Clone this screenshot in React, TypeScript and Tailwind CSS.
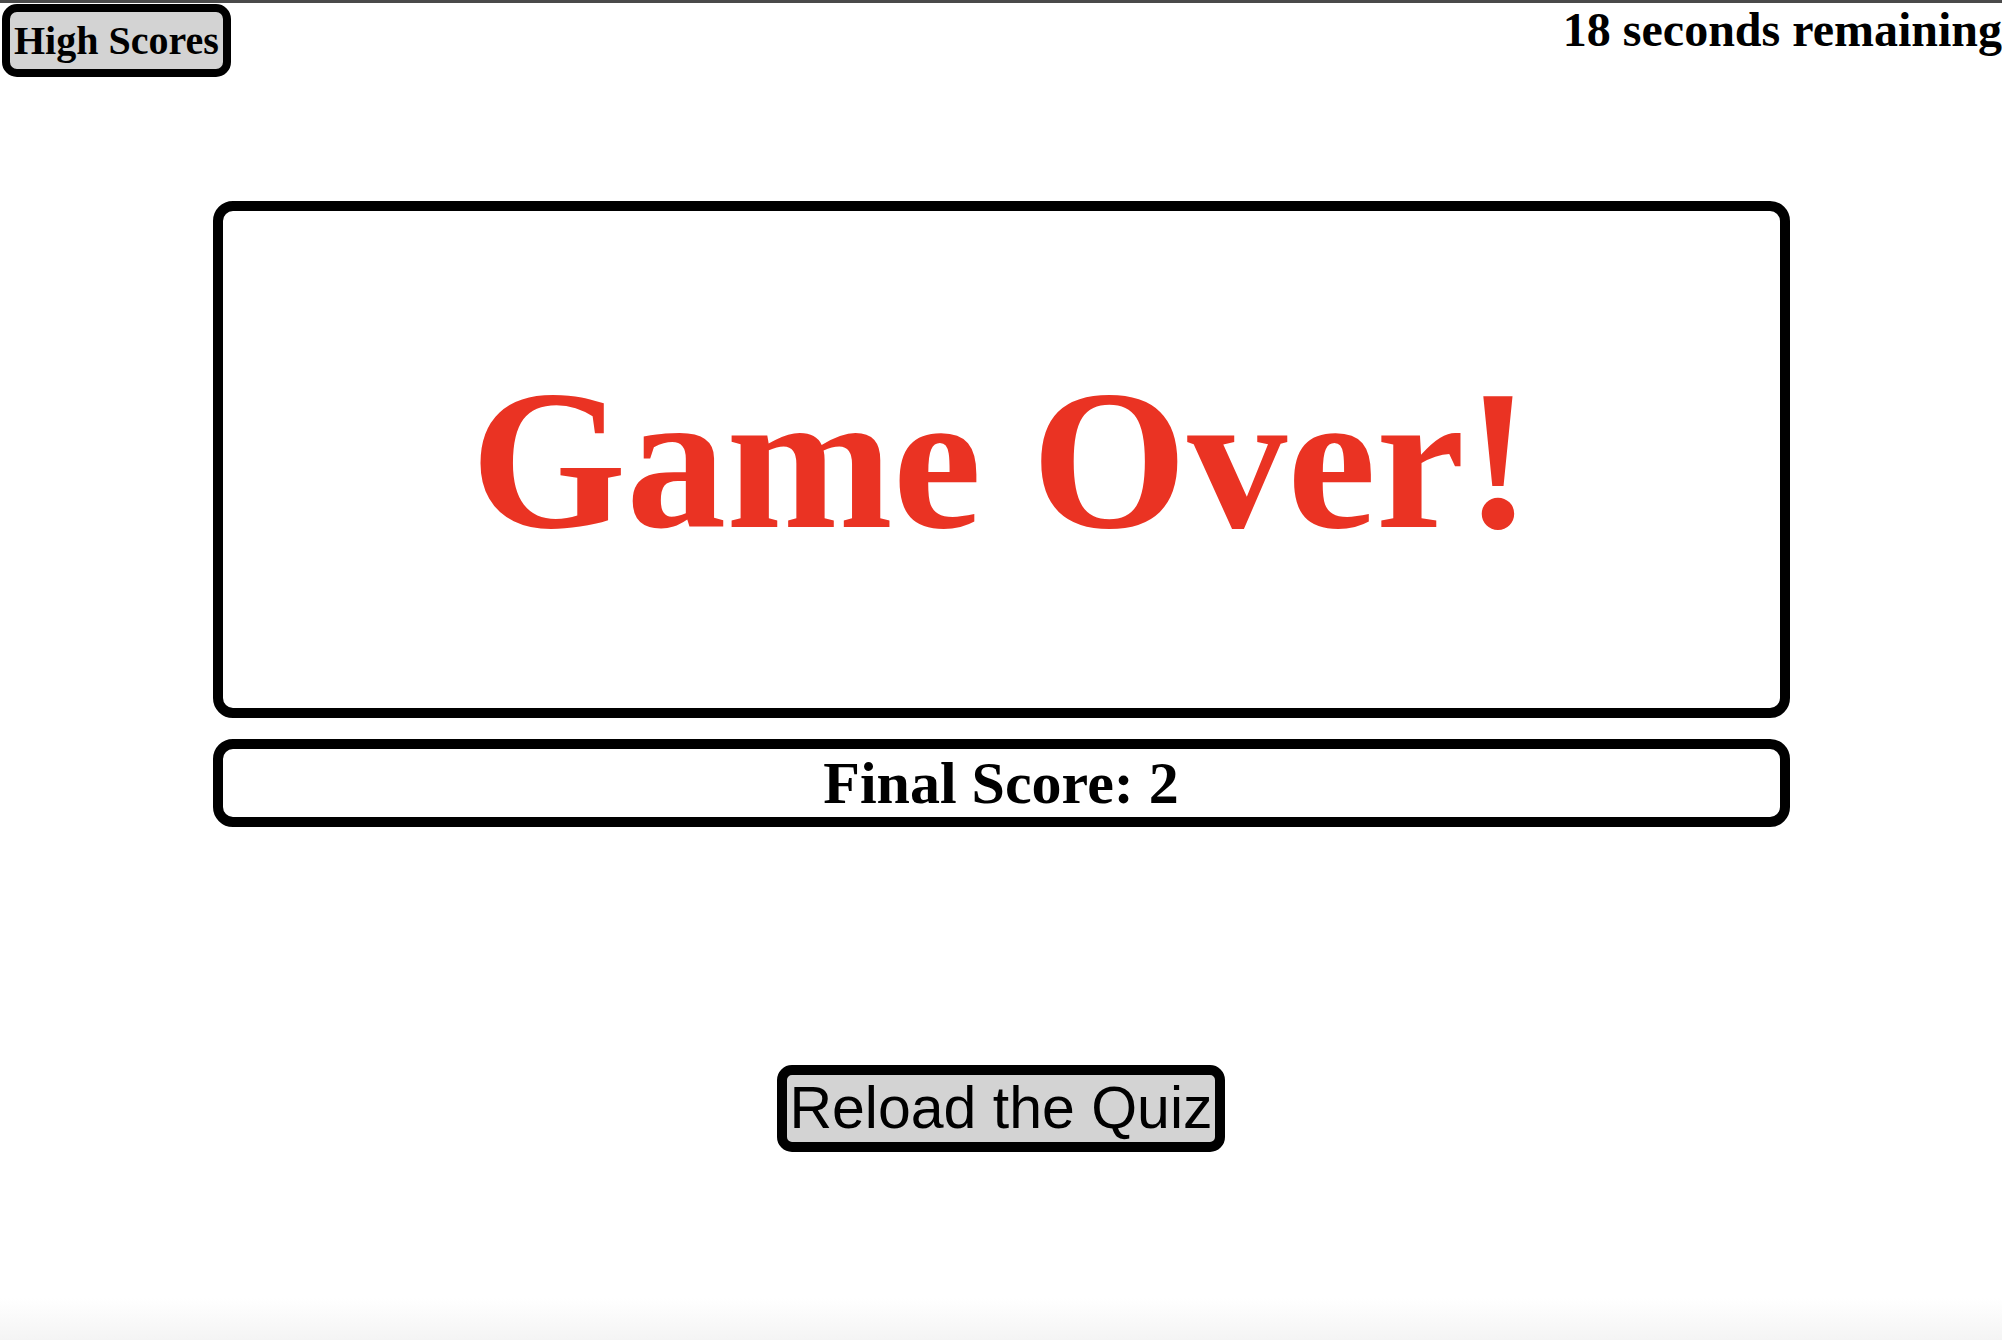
const serif = "font-['Liberation_Serif','Times_New_Roman',serif]";

export default function App() {
  return (
    <div className="h-[1340px] w-full overflow-hidden bg-[linear-gradient(to_bottom,#ffffff_calc(100%-42px),#f4f4f4)]">
      {/* window edge */}
      <div className="h-[3px] w-full bg-[#4a4a4a]" />

      <header className="flex items-start justify-between">
        <button
          className={`ml-[2px] mt-[1px] h-[73px] whitespace-nowrap rounded-[15px] border-[8px] border-black bg-[#d3d3d3] px-[4px] text-left text-[40px] font-bold leading-[57px] text-black ${serif}`}
        >
          High Scores
        </button>
        <h2
          className={`whitespace-nowrap text-[48px] font-bold leading-[53px] text-black ${serif}`}
        >
          18 seconds remaining
        </h2>
      </header>

      <main className="flex flex-col items-center">
        <section className="mt-[124px] flex h-[517px] w-[1577px] items-center justify-center rounded-[20px] border-[10px] border-black">
          <h1 className={`text-[200px] font-bold leading-none text-[#ea3323] ${serif}`}>
            Game Over!
          </h1>
        </section>

        <div className="mt-[21px] flex h-[88px] w-[1577px] items-center justify-center rounded-[20px] border-[10px] border-black">
          <p className={`text-[60px] font-bold leading-none text-black ${serif}`}>
            Final Score: 2
          </p>
        </div>

        <button className="mt-[238px] flex h-[87px] w-[448px] items-center justify-center rounded-[15px] border-[10px] border-black bg-[#d3d3d3] font-['Liberation_Sans',Arial,sans-serif] text-[59px] leading-none text-black">
          Reload the Quiz
        </button>
      </main>
    </div>
  );
}
